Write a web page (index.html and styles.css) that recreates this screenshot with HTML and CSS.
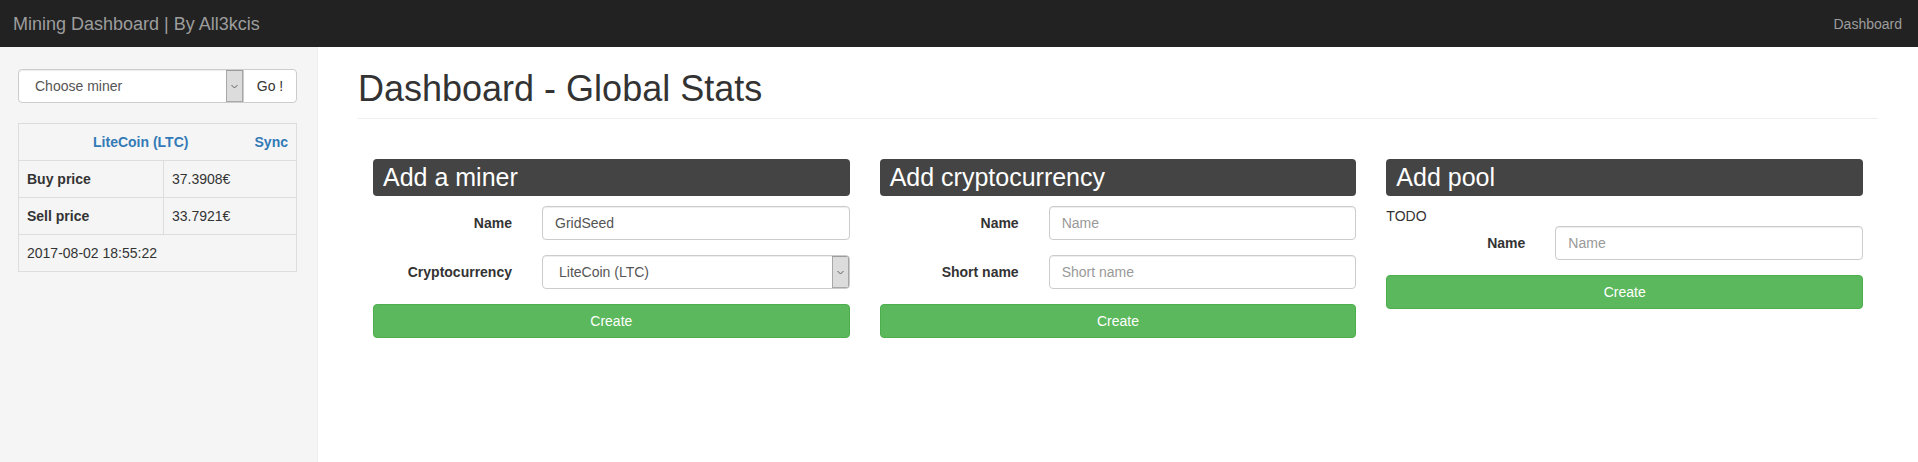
FILE: index.html
```html
<!DOCTYPE html>
<html lang="en">
<head>
<meta charset="utf-8">
<title>Mining Dashboard</title>
<link rel="stylesheet" href="styles.css">
</head>
<body>
<nav class="navbar">
  <a class="brand" href="#">Mining Dashboard | By All3kcis</a>
  <a class="nav-link" href="#">Dashboard</a>
</nav>
<div class="layout">
  <aside class="sidebar">
    <div class="input-group">
      <select class="select select-side">
        <option>Choose miner</option>
      </select>
      <button class="btn-default" type="button">Go !</button>
    </div>
    <table class="stats">
      <colgroup><col class="col-label"><col></colgroup>
      <tr>
        <th colspan="2" class="head"><a class="sync" href="#">Sync</a><a href="#">LiteCoin (LTC)</a></th>
      </tr>
      <tr><th>Buy price</th><td>37.3908€</td></tr>
      <tr><th>Sell price</th><td>33.7921€</td></tr>
      <tr><td colspan="2">2017-08-02 18:55:22</td></tr>
    </table>
  </aside>
  <main class="main">
    <div class="page-header"><h1>Dashboard - Global Stats</h1></div>
    <div class="cards">
      <section class="card">
        <h3 class="card-title">Add a miner</h3>
        <div class="form-group">
          <label class="label">Name</label>
          <input class="input" type="text" value="GridSeed">
        </div>
        <div class="form-group">
          <label class="label">Cryptocurrency</label>
          <select class="select"><option>LiteCoin (LTC)</option></select>
        </div>
        <button class="btn-success" type="button">Create</button>
      </section>
      <section class="card">
        <h3 class="card-title">Add cryptocurrency</h3>
        <div class="form-group">
          <label class="label">Name</label>
          <input class="input" type="text" placeholder="Name">
        </div>
        <div class="form-group">
          <label class="label">Short name</label>
          <input class="input" type="text" placeholder="Short name">
        </div>
        <button class="btn-success" type="button">Create</button>
      </section>
      <section class="card">
        <h3 class="card-title">Add pool</h3>
        <div class="todo">TODO</div>
        <div class="form-group">
          <label class="label">Name</label>
          <input class="input" type="text" placeholder="Name">
        </div>
        <button class="btn-success" type="button">Create</button>
      </section>
    </div>
  </main>
</div>
</body>
</html>
```
FILE: styles.css
```css
* { box-sizing: border-box; }
html, body { margin: 0; padding: 0; }
body {
  font-family: "Liberation Sans", Arial, Helvetica, sans-serif;
  font-size: 14px;
  line-height: 1.42857;
  color: #333;
  background: #fff;
  height: 462px;
  overflow: hidden;
}
a { text-decoration: none; }

.navbar {
  height: 47px;
  background: #222;
  display: flex;
  align-items: center;
  justify-content: space-between;
  padding: 0 16px 0 13px;
}
.brand { color: #9d9d9d; font-size: 18px; line-height: 20px; }
.nav-link { color: #9d9d9d; font-size: 14px; line-height: 20px; }

.layout { display: flex; height: calc(100% - 47px); }

.sidebar {
  width: 318px;
  flex: 0 0 318px;
  background: #f5f5f5;
  border-right: 1px solid #eee;
  padding: 22px 20px 0 18px;
}

.input-group { display: flex; height: 34px; }
.select {
  appearance: none;
  -webkit-appearance: none;
  height: 34px;
  width: 100%;
  font-family: inherit;
  font-size: 14px;
  color: #555;
  padding: 6px 24px 6px 16px;
  border: 1px solid #ccc;
  border-radius: 4px;
  box-shadow: inset 0 1px 1px rgba(0,0,0,.075);
  background: #fff url("data:image/svg+xml,%3Csvg xmlns='http://www.w3.org/2000/svg' width='17' height='32' viewBox='0 0 17 32'%3E%3Crect x='0.5' y='0.5' width='16' height='31' fill='%23dcdcdc' stroke='%23a8a8a8'/%3E%3Cpath d='M5.5 15l3 3 3-3' fill='none' stroke='%23606060' stroke-width='1'/%3E%3C/svg%3E") no-repeat right top / 17px 100%;
}
.select-side { flex: 1; border-radius: 4px 0 0 4px; }
.btn-default {
  flex: 0 0 54px;
  margin-left: -1px;
  height: 34px;
  font-family: inherit;
  font-size: 14px;
  font-weight: normal;
  color: #333;
  background: #fff;
  border: 1px solid #ccc;
  border-radius: 0 4px 4px 0;
  padding: 6px 12px;
}

.stats {
  margin-top: 20px;
  width: 100%;
  border-collapse: collapse;
  border: 1px solid #ddd;
}
.col-label { width: 145px; }
.stats th, .stats td {
  border: 1px solid #ddd;
  padding: 8px;
  line-height: 20px;
  text-align: left;
  vertical-align: top;
}
.stats th { font-weight: bold; }
.stats .head { text-align: center; }
.stats .head a { color: #337ab7; font-weight: bold; }
.stats .head .sync { float: right; }

.main { flex: 1; padding: 22px 40px 0 40px; }
.page-header { border-bottom: 1px solid #eee; padding-bottom: 9px; }
.page-header h1 {
  margin: 0;
  font-size: 36px;
  font-weight: 500;
  line-height: 1.1;
}

.cards {
  display: grid;
  grid-template-columns: repeat(3, 1fr);
  column-gap: 30px;
  padding: 0 15px;
  margin-top: 40px;
}
.card-title {
  margin: 0 0 10px;
  background: #444;
  color: #fff;
  font-size: 25px;
  font-weight: 500;
  line-height: 28px;
  padding: 4px 10px 5px;
  border-radius: 4px;
}
.todo { line-height: 20px; }
.form-group {
  display: grid;
  grid-template-columns: 139px 1fr;
  column-gap: 30px;
  margin-bottom: 15px;
}
.label {
  font-weight: bold;
  text-align: right;
  padding-top: 7px;
  line-height: 20px;
}
.input {
  height: 34px;
  width: 100%;
  font-family: inherit;
  font-size: 14px;
  color: #555;
  padding: 6px 12px;
  border: 1px solid #ccc;
  border-radius: 4px;
  box-shadow: inset 0 1px 1px rgba(0,0,0,.075);
  background: #fff;
}
.input::placeholder { color: #999; }
.btn-success {
  display: block;
  width: 100%;
  height: 34px;
  font-family: inherit;
  font-size: 14px;
  color: #fff;
  background: #5cb85c;
  border: 1px solid #4cae4c;
  border-radius: 4px;
  padding: 6px 12px;
}
```
